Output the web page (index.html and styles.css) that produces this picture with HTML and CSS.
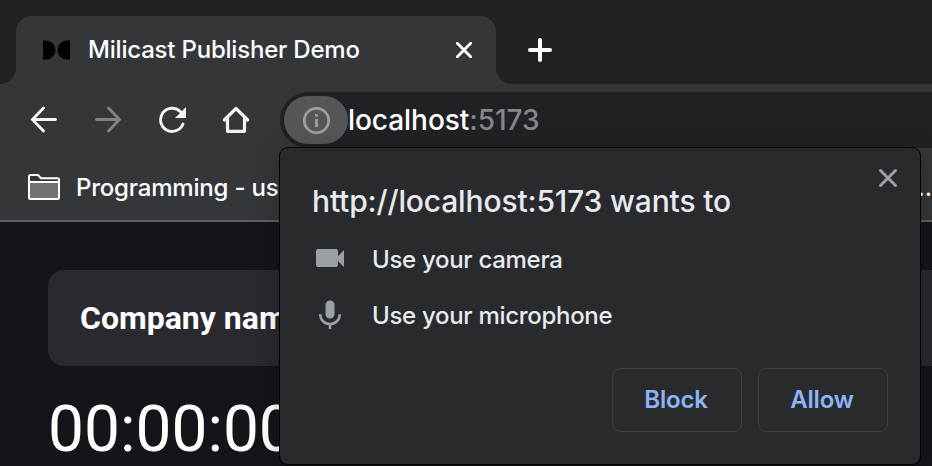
FILE: index.html
```
<!DOCTYPE html>
<html lang="en">
<head>
<meta charset="utf-8">
<title>Milicast Publisher Demo</title>
<link rel="stylesheet" href="styles.css">
</head>
<body>
<div class="browser">
  <header class="tabstrip">
    <div class="tab">
      <svg class="favicon" width="28" height="20" viewBox="0 0 28 20"><path d="M0 .5h3a9.500 9.500 0 0 1 0 19H0zM27 .5h-3a9.500 9.500 0 0 0 0 19h3z"/></svg>
      <span class="tab-title">Milicast Publisher Demo</span>
      <svg class="tab-close" width="16" height="16" viewBox="0 0 16 16"><path d="M1.300 1.300l13.400 13.400M14.700 1.300L1.300 14.700"/></svg>
    </div>
    <svg class="new-tab" width="24" height="24" viewBox="0 0 24 24"><path d="M12 2v20M2 12h20"/></svg>
  </header>
  <nav class="toolbar">
    <svg class="nav-icon" width="28" height="28" viewBox="0 0 28 28"><path d="M25.500 13.500H3M13.500 2L2.500 13.500l11 11.500"/></svg>
    <svg class="nav-icon disabled" width="28" height="28" viewBox="0 0 28 28"><path d="M2.500 13.500H25M14.500 2l11 11.500-11 11.500"/></svg>
    <svg class="nav-icon" width="28" height="28" viewBox="0 0 28 28"><path d="M22.500 5.700A11.600 11.600 0 1 0 25 18"/><path class="solid" d="M28 1v11H17z"/></svg>
    <svg class="nav-icon home" width="28" height="28" viewBox="0 0 28 28"><path d="M5.500 12v13.300h17V12M2.300 14L14 2.500 25.700 14" stroke-linejoin="round"/></svg>
    <div class="omnibox">
      <span class="site-info"><svg width="28" height="28" viewBox="0 0 28 28"><circle cx="14.500" cy="14.500" r="12.200"/><path d="M14.500 13v8M14.500 8v2.800"/></svg></span>
      <span class="url">localhost<span class="port">:5173</span></span>
    </div>
  </nav>
  <div class="bookmarks">
    <svg class="folder" width="32" height="26" viewBox="0 0 32 26"><path class="fill" d="M1 8h30v17H1z"/><path d="M1 8V2.500Q1 1 2.500 1H10l3 3.200h16.500Q31 4.200 31 5.700V23.500Q31 25 29.500 25h-27Q1 25 1 23.500zh30"/></svg>
    <span class="bookmark">Programming - us</span>
    <span class="overflow">...</span>
  </div>
  <main class="page">
    <section class="card">Company name</section>
    <div class="timer">00:00:00</div>
  </main>
</div>
<div class="prompt" role="dialog">
  <div class="prompt-head">
    <h1>http://localhost:5173 wants to</h1>
    <svg class="prompt-close" width="20" height="20" viewBox="0 0 20 20"><path d="M2.500 2.500l15 15M17.500 2.500l-15 15"/></svg>
  </div>
  <ul>
    <li><svg width="32" height="32" viewBox="0 0 32 32"><path d="M4 5h18q2 0 2 2v5l6-6v17l-6-6v4q0 2-2 2H4q-2 0-2-2V7q0-2 2-2z"/></svg><span>Use your camera</span></li>
    <li><svg width="32" height="32" viewBox="0 0 32 32"><rect x="11.500" y="0.500" width="9" height="18" rx="4.500"/><path class="line" d="M6.200 14.300a9.800 9.800 0 0 0 19.600 0M16 24v5"/></svg><span>Use your microphone</span></li>
  </ul>
  <div class="actions">
    <button class="block">Block</button>
    <button class="allow">Allow</button>
  </div>
</div>
</body>
</html>
```
FILE: styles.css
```
* { box-sizing: border-box; }
body {
  margin: 0;
  width: 932px;
  height: 466px;
  overflow: hidden;
  background: #15141a;
  color: #fff;
  font-family: Inter, "Liberation Sans", sans-serif;
  font-weight: 450;
  position: relative;
}
svg { display: block; flex: none; }
.browser { width: 932px; height: 466px; overflow: hidden; }
.tabstrip {
  height: 84px;
  padding: 16px 0 0 16px;
  background: #202124;
  display: flex;
  align-items: flex-start;
}
.tab {
  position: relative;
  width: 480px;
  height: 68px;
  padding: 0 24px 0 26px;
  border-radius: 16px 16px 0 0;
  background: #35363a;
  display: flex;
  align-items: center;
}
.tab::before, .tab::after {
  content: "";
  position: absolute;
  bottom: 0;
  width: 16px;
  height: 16px;
}
.tab::before { left: -16px; background: radial-gradient(circle at 0 0, #202124 15.500px, #35363a 16.500px); }
.tab::after { right: -16px; background: radial-gradient(circle at 100% 0, #202124 15.500px, #35363a 16.500px); }
.favicon { margin-left: 1px; fill: #000; }
.tab-title {
  margin-left: 17px;
  flex: 1;
  padding-bottom: 2px;
  font-size: 24px;
  letter-spacing: -0.200px;
  white-space: nowrap;
}
.tab-close { stroke: #fff; stroke-width: 2.800; stroke-linecap: round; }
.new-tab { margin: 22px 0 0 32px; stroke: #fff; stroke-width: 4; stroke-linecap: round; }
.toolbar {
  height: 64px;
  padding: 8px 0 0 30px;
  background: #35363a;
  display: flex;
  align-items: center;
  gap: 36px;
}
.nav-icon { fill: none; stroke: #f1f3f4; stroke-width: 2.900; stroke-linecap: round; }
.nav-icon .solid { fill: #f1f3f4; stroke: none; }
.nav-icon.disabled { stroke: #818285; }
.home { stroke-width: 3.200; }
.omnibox {
  flex: 1;
  height: 56px;
  margin-left: -6px;
  padding-left: 4px;
  border-radius: 28px 0 0 28px;
  background: #202124;
  display: flex;
  align-items: center;
}
.site-info {
  width: 64px;
  height: 48px;
  border-radius: 24px;
  background: #555658;
  display: grid;
  place-items: center;
}
.site-info svg { fill: none; stroke: #9aa0a6; stroke-width: 2.800; }
.url { font-size: 28px; letter-spacing: -0.050px; white-space: nowrap; }
.port { color: #86878a; }
.bookmarks {
  height: 74px;
  padding: 0 0 0 28px;
  background: #35363a;
  border-bottom: 2px solid #5f6064;
  display: flex;
  align-items: center;
}
.folder { margin-top: 6px; fill: none; stroke: #fff; stroke-width: 2; stroke-linejoin: round; }
.folder .fill { fill: #717275; stroke: none; }
.bookmark { margin: 6px 0 0 16px; font-size: 24px; letter-spacing: -0.200px; white-space: nowrap; }
.overflow { margin: 6px 0 0 auto; font-size: 24px; }
.page { padding: 48px 0 0 48px; font-family: Roboto, sans-serif; font-weight: 400; }
.card {
  height: 96px;
  padding-left: 32px;
  border-radius: 16px 0 0 16px;
  background: #2a292f;
  font-size: 32px;
  font-weight: 700;
  line-height: 96px;
}
.timer { margin-top: 26px; font-size: 64px; line-height: 76px; }
.prompt {
  position: absolute;
  left: 280px;
  top: 148px;
  width: 640px;
  height: 316px;
  padding: 0 32px;
  border-radius: 8px;
  background: #292a2d;
  color: #e8eaed;
  box-shadow: 0 0 0 1px #000, 0 4px 24px rgba(0, 0, 0, .25);
}
.prompt-head { display: flex; justify-content: space-between; padding-top: 20px; height: 84px; }
h1 { margin: 13px 0 0; font-size: 30px; line-height: 40px; font-weight: 450; letter-spacing: -0.150px; white-space: nowrap; }
.prompt-close { margin-right: -10px; stroke: #9aa0a6; stroke-width: 3; stroke-linecap: round; }
ul { margin: 0; padding: 0 0 0 2px; list-style: none; }
li { height: 56px; display: flex; align-items: center; gap: 26px; font-size: 24px; letter-spacing: -0.300px; }
li span { padding-bottom: 2px; }
li svg { fill: #9aa0a6; }
.line { fill: none; stroke: #9aa0a6; stroke-width: 2.600; }
.actions { display: flex; justify-content: flex-end; gap: 16px; margin-top: 24px; }
button {
  width: 130px;
  height: 64px;
  padding: 0 2px 2px 0;
  border: 1px solid #3f4043;
  border-radius: 8px;
  background: transparent;
  color: #8fb3f7;
  font: 600 24px Inter, sans-serif;
  letter-spacing: -0.200px;
}
```
